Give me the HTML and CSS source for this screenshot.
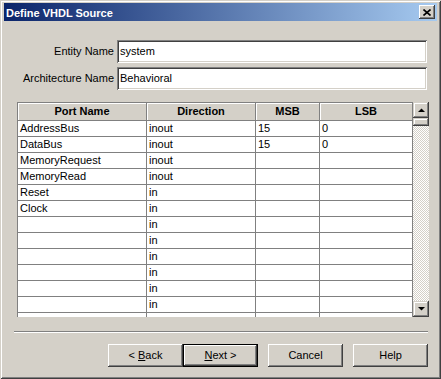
FILE: index.html
```html
<!DOCTYPE html>
<html>
<head>
<meta charset="utf-8">
<link rel="stylesheet" href="styles.css">
</head>
<body>
<div class="window">
  <div class="titlebar">
    <span class="title">Define VHDL Source</span>
    <div class="close"><svg width="8" height="7" viewBox="0 0 8 7"><path d="M0.5 0.5L7.5 6.5M7.5 0.5L0.5 6.5" stroke="#000" stroke-width="1.6" fill="none"/></svg></div>
  </div>
  <div class="content">
    <div class="form">
      <span class="label">Entity Name</span><div class="field">system</div>
      <span class="label">Architecture Name</span><div class="field">Behavioral</div>
    </div>
    <div class="table-wrap">
      <div class="grid">
        <div class="row head"><div class="cell">Port Name</div><div class="cell">Direction</div><div class="cell">MSB</div><div class="cell">LSB</div></div>
        <div class="row"><div class="cell">AddressBus</div><div class="cell">inout</div><div class="cell">15</div><div class="cell">0</div></div>
        <div class="row"><div class="cell">DataBus</div><div class="cell">inout</div><div class="cell">15</div><div class="cell">0</div></div>
        <div class="row"><div class="cell">MemoryRequest</div><div class="cell">inout</div><div class="cell"></div><div class="cell"></div></div>
        <div class="row"><div class="cell">MemoryRead</div><div class="cell">inout</div><div class="cell"></div><div class="cell"></div></div>
        <div class="row"><div class="cell">Reset</div><div class="cell">in</div><div class="cell"></div><div class="cell"></div></div>
        <div class="row"><div class="cell">Clock</div><div class="cell">in</div><div class="cell"></div><div class="cell"></div></div>
        <div class="row"><div class="cell"></div><div class="cell">in</div><div class="cell"></div><div class="cell"></div></div>
        <div class="row"><div class="cell"></div><div class="cell">in</div><div class="cell"></div><div class="cell"></div></div>
        <div class="row"><div class="cell"></div><div class="cell">in</div><div class="cell"></div><div class="cell"></div></div>
        <div class="row"><div class="cell"></div><div class="cell">in</div><div class="cell"></div><div class="cell"></div></div>
        <div class="row"><div class="cell"></div><div class="cell">in</div><div class="cell"></div><div class="cell"></div></div>
        <div class="row"><div class="cell"></div><div class="cell">in</div><div class="cell"></div><div class="cell"></div></div>
        <div class="row"><div class="cell"></div><div class="cell"></div><div class="cell"></div><div class="cell"></div></div>
      </div>
      <div class="scrollbar">
        <div class="sb-btn"><svg width="7" height="4" viewBox="0 0 7 4"><polygon points="0,4 7,4 3.5,0.5" fill="#000"/></svg></div>
        <div class="sb-thumb"></div>
        <div class="sb-track"></div>
        <div class="sb-btn"><svg width="7" height="4" viewBox="0 0 7 4"><polygon points="0,0 7,0 3.5,3.5" fill="#000"/></svg></div>
      </div>
    </div>
    <div class="separator"></div>
    <div class="buttons">
      <div class="btn">&lt; <u>B</u>ack</div>
      <div class="btn default"><u>N</u>ext &gt;</div>
      <div class="btn gap">Cancel</div>
      <div class="btn gap">Help</div>
    </div>
  </div>
</div>
</body>
</html>
```

FILE: styles.css
```css
* { box-sizing: border-box; }
body {
  margin: 0;
  font-family: "Liberation Sans", Arial, sans-serif;
  font-size: 11px;
  color: #000;
  background: #D4D0C8;
}
.window {
  width: 441px;
  height: 379px;
  background: #D4D0C8;
  padding: 3px 4px 4px 4px;
  box-shadow: inset 1px 1px #D4D0C8, inset -1px -1px #404040, inset 2px 2px #fff, inset -2px -2px #808080;
  display: flex;
  flex-direction: column;
}
.titlebar {
  height: 18px;
  display: flex;
  align-items: center;
  padding: 0 2px;
  background: linear-gradient(90deg, #0A246A, #A6CAF0);
}
.title {
  flex: 1;
  color: #fff;
  font-weight: bold;
  line-height: 16px;
  padding-top: 2px;
}
.close {
  width: 16px;
  height: 14px;
  background: #D4D0C8;
  box-shadow: inset -1px -1px #404040, inset 1px 1px #fff, inset -2px -2px #808080;
  display: flex;
  align-items: center;
  justify-content: center;
}
.close svg { display: block; margin-left: -1px; }
.content {
  flex: 1;
  display: flex;
  flex-direction: column;
}
.form {
  display: grid;
  grid-template-columns: 110px 310px;
  column-gap: 3px;
  row-gap: 4px;
  margin-top: 19px;
}
.label {
  text-align: right;
  line-height: 23px;
  white-space: nowrap;
}
.field {
  height: 23px;
  background: #fff;
  line-height: 23px;
  padding: 0 3px;
  box-shadow: inset 1px 1px #808080, inset -1px -1px #fff, inset 2px 2px #404040, inset -2px -2px #D4D0C8;
}
.table-wrap {
  display: flex;
  margin: 12px 0 0 13px;
  width: 412px;
  height: 215px;
  overflow: hidden;
}
.grid {
  width: 396px;
  height: 215px;
  overflow: hidden;
  background: #fff;
}
.row {
  display: grid;
  grid-template-columns: 129px 109px 64px 94px;
  height: 16px;
}
.cell {
  border-left: 1px solid #808080;
  border-bottom: 1px solid #808080;
  padding-left: 2px;
  line-height: 15px;
  white-space: nowrap;
  overflow: hidden;
}
.cell:last-child { border-right: 1px solid #808080; }
.head { height: 19px; }
.head .cell {
  background: #D4D0C8;
  border-top: 1px solid #808080;
  font-weight: bold;
  text-align: center;
  padding-left: 0;
  line-height: 17px;
  box-shadow: inset 1px 1px #fff;
}
.scrollbar {
  width: 16px;
  display: flex;
  flex-direction: column;
}
.sb-btn, .sb-thumb {
  background: #D4D0C8;
  box-shadow: inset -1px -1px #404040, inset 1px 1px #D4D0C8, inset -2px -2px #808080, inset 2px 2px #fff;
}
.sb-btn {
  height: 16px;
  display: flex;
  align-items: center;
  justify-content: center;
}
.sb-btn svg { display: block; }
.sb-thumb { height: 8px; }
.sb-track {
  flex: 1;
  background-color: #fff;
  background-image: conic-gradient(#D4D0C8 25%, #fff 0 50%, #D4D0C8 0 75%, #fff 0);
  background-size: 2px 2px;
}
.separator {
  margin: 14px 0 0 10px;
  width: 414px;
  height: 2px;
  border-top: 1px solid #808080;
  border-bottom: 1px solid #fff;
}
.buttons {
  display: flex;
  justify-content: flex-end;
  margin-top: 11px;
  padding-right: 9px;
}
.btn {
  width: 75px;
  height: 23px;
  line-height: 23px;
  text-align: center;
  background: #D4D0C8;
  box-shadow: inset -1px -1px #404040, inset 1px 1px #fff, inset -2px -2px #808080, inset 2px 2px #D4D0C8;
}
.btn.default {
  box-shadow: inset 0 0 0 1px #000, inset -2px -2px #404040, inset 2px 2px #fff, inset -3px -3px #808080, inset 3px 3px #D4D0C8;
}
.btn.gap { margin-left: 10px; }
```
